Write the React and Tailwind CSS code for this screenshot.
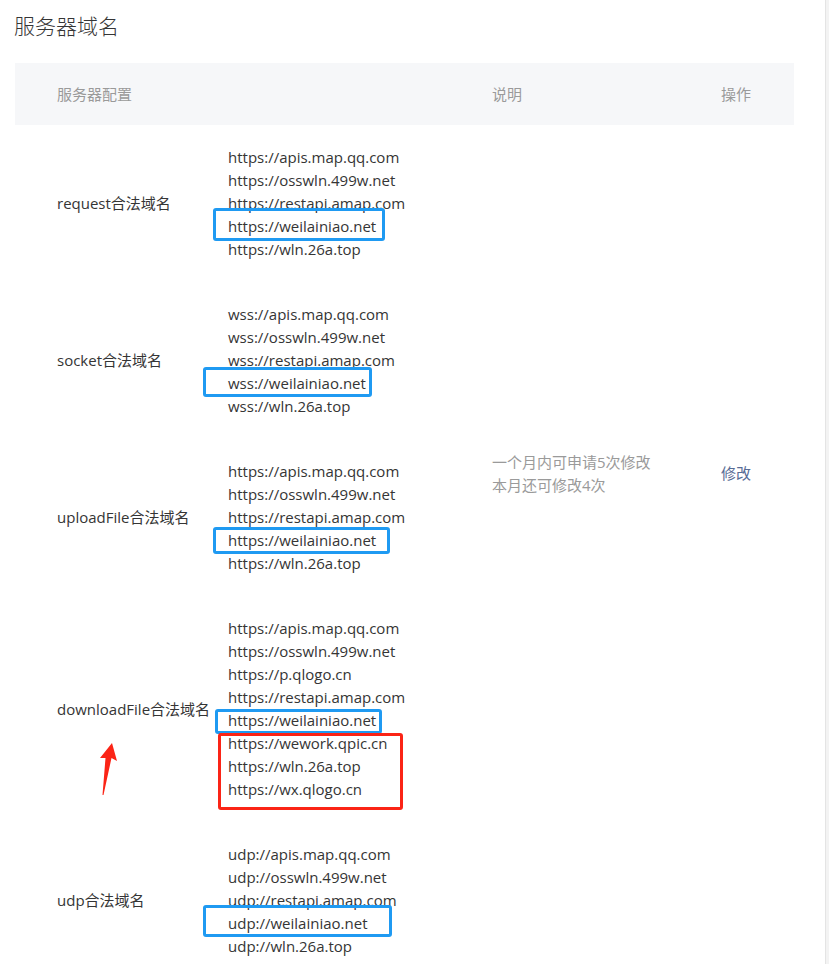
import React from "react";

const rows = [
  {
    label: "request合法域名",
    urls: [
      "https://apis.map.qq.com",
      "https://osswln.499w.net",
      "https://restapi.amap.com",
      "https://weilainiao.net",
      "https://wln.26a.top",
    ],
    marks: {
      3: "left-[-15px] top-[-7px] w-[172px] h-[33px] border-[#1f9af2]",
    },
  },
  {
    label: "socket合法域名",
    urls: [
      "wss://apis.map.qq.com",
      "wss://osswln.499w.net",
      "wss://restapi.amap.com",
      "wss://weilainiao.net",
      "wss://wln.26a.top",
    ],
    marks: {
      3: "left-[-25px] top-[-5px] w-[169px] h-[30px] border-[#1f9af2]",
    },
  },
  {
    label: "uploadFile合法域名",
    urls: [
      "https://apis.map.qq.com",
      "https://osswln.499w.net",
      "https://restapi.amap.com",
      "https://weilainiao.net",
      "https://wln.26a.top",
    ],
    marks: {
      3: "left-[-15px] top-[-2px] w-[177px] h-[27px] border-[#1f9af2]",
    },
  },
  {
    label: "downloadFile合法域名",
    urls: [
      "https://apis.map.qq.com",
      "https://osswln.499w.net",
      "https://p.qlogo.cn",
      "https://restapi.amap.com",
      "https://weilainiao.net",
      "https://wework.qpic.cn",
      "https://wln.26a.top",
      "https://wx.qlogo.cn",
    ],
    marks: {
      4: "left-[-13px] top-[0px] w-[167px] h-[25px] border-[#1f9af2]",
      5: "left-[-10px] top-[1px] w-[185px] h-[77px] border-[#fb2416]",
    },
    arrow: true,
  },
  {
    label: "udp合法域名",
    urls: [
      "udp://apis.map.qq.com",
      "udp://osswln.499w.net",
      "udp://restapi.amap.com",
      "udp://weilainiao.net",
      "udp://wln.26a.top",
    ],
    marks: {
      3: "left-[-25px] top-[-7px] w-[189px] h-[32px] border-[#1f9af2]",
    },
  },
];

function Row({ row }) {
  return (
    <>
      {/* label */}
      <div className="col-start-1 relative flex items-center pl-[42px]">
        {row.label}
        {row.arrow && (
          <svg
            className="absolute left-[80px] top-[144px] w-[25px] h-[60px]"
            viewBox="0 0 25 60"
          >
            <polygon
              points="17,3 22,21 16.5,18 8.5,55 7.5,55 10.5,18 5,18"
              fill="#fb2416"
            />
          </svg>
        )}
      </div>

      {/* urls */}
      <div className="col-start-2 py-[21px]">
        {row.urls.map((url, i) => (
          <div key={i} className="relative h-[23px] leading-[23px] whitespace-nowrap">
            {url}
            {row.marks[i] && (
              <span
                className={
                  "absolute border-[3px] rounded-[3px] pointer-events-none " +
                  row.marks[i]
                }
              />
            )}
          </div>
        ))}
      </div>
    </>
  );
}

export default function App() {
  return (
    <div
      className="w-[829px] h-[964px] overflow-hidden flex bg-white text-[#353535] text-[15px]"
      style={{ fontFamily: '"Open Sans", "Noto Sans CJK SC", sans-serif' }}
    >
      <div className="flex-1 pl-[15px] pr-[31px]">
        {/* Page title */}
        <h1 className="h-[63px] pt-[10px] -ml-[1px] text-[21px] leading-[32px] font-light text-[#353535]">
          服务器域名
        </h1>

        {/* Table header */}
        <div className="grid grid-cols-[477px_229px_72px] h-[62px] items-center bg-[#f6f7f9] text-[#9a9a9a]">
          <div className="pl-[42px]">服务器配置</div>
          <div>说明</div>
          <div>操作</div>
        </div>

        {/* Table body */}
        <div className="grid grid-cols-[213px_264px_229px_72px]">
          {rows.map((row) => (
            <Row key={row.label} row={row} />
          ))}

          <div className="col-start-3 row-start-1 row-span-4 flex flex-col justify-center leading-[23px] text-[#9a9a9a]">
            <div>一个月内可申请5次修改</div>
            <div>本月还可修改4次</div>
          </div>
          <div className="col-start-4 row-start-1 row-span-4 flex items-center">
            <span className="text-[#576b95] cursor-pointer">修改</span>
          </div>
        </div>
      </div>

      {/* scrollbar track */}
      <div className="w-[4px] h-full border-l border-[#e4e4e4] bg-[#f3f3f3]" />
    </div>
  );
}
